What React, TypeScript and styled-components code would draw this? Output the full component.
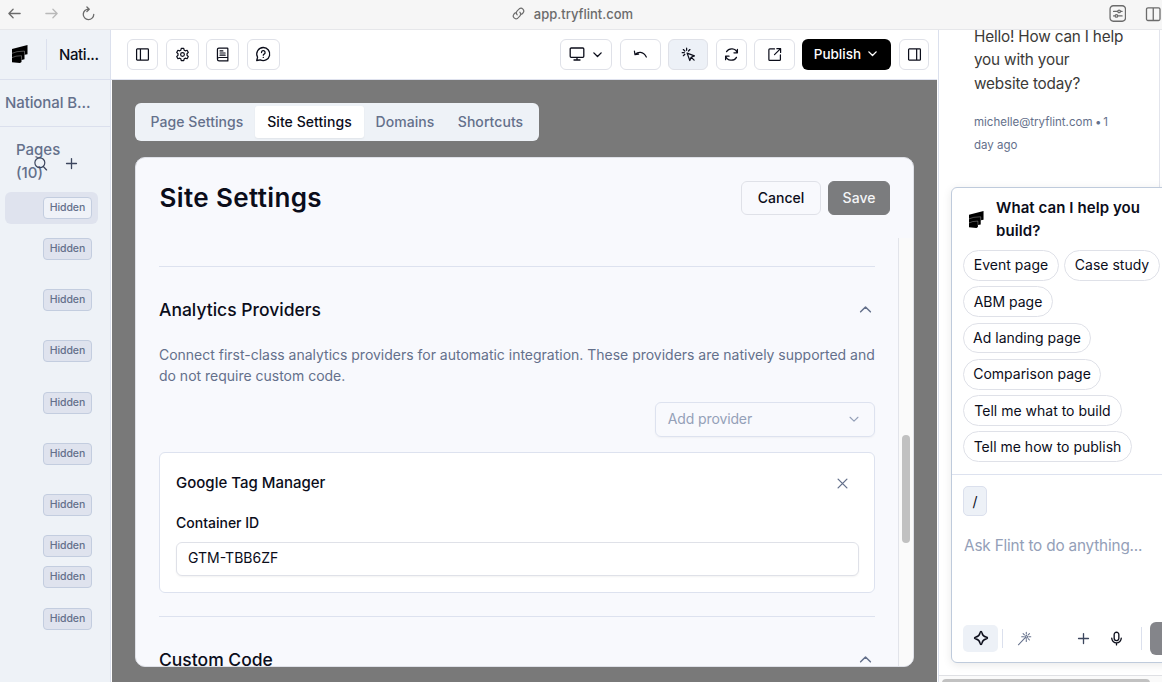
import React from "react";
import styled, { createGlobalStyle, css } from "styled-components";

const Global = createGlobalStyle`
  *, *::before, *::after { box-sizing: border-box; }
  html, body { margin: 0; padding: 0; overflow: hidden; }
  body { font-family: Inter, "Liberation Sans", sans-serif; color: #0b0d1a; background: #fff; }
  button, input { font-family: inherit; color: inherit; margin: 0; }
  h1, h2, h3, p { margin: 0; font-weight: inherit; }
`;

const Page = styled.div`
  width: 1162px;
  height: 682px;
  display: flex;
  flex-direction: column;
  overflow: hidden;
`;

const BrowserBar = styled.header`
  height: 30px;
  flex: none;
  display: flex;
  align-items: center;
  justify-content: space-between;
  background: #f6f6f6;
  border-bottom: 1px solid #e6e7ea;
  padding: 0 2px 2px 7px;
  color: #6b6b6b;
`;
const NavGroup = styled.div`
  display: flex;
  align-items: center;
  gap: 22px;
  width: 160px;
`;
const Address = styled.div`
  display: flex;
  align-items: center;
  gap: 8px;
  font-size: 13px;
  font-weight: 500;
  line-height: 18px;
  margin-left: -24px;
`;
const BrowserTools = styled.div`
  display: flex;
  align-items: center;
  justify-content: flex-end;
  gap: 19px;
  width: 160px;
  margin-right: -1px;
`;

const Body = styled.div`
  flex: 1;
  display: flex;
  min-height: 0;
`;

const Sidebar = styled.aside`
  width: 111px;
  flex: none;
  background: #eef2f7;
  border-right: 1px solid #dbe0ed;
  display: flex;
  flex-direction: column;
`;
const Brand = styled.div`
  height: 50px;
  flex: none;
  display: flex;
  align-items: center;
  padding: 0 0 1px 12px;
  border-bottom: 1px solid #dbe0ed;
  font-size: 15px;
  font-weight: 500;
  letter-spacing: -0.4px;
`;
const BrandRule = styled.span`
  width: 1px;
  height: 31px;
  background: #dbe0ed;
  margin: 0 12px 0 18px;
`;
const Project = styled.div`
  height: 47px;
  flex: none;
  padding: 0 5px;
  line-height: 46px;
  border-bottom: 1px solid #dbe0ed;
  font-size: 15px;
  font-weight: 500;
  letter-spacing: -0.1px;
  color: #64708b;
  white-space: nowrap;
`;
const PagesHead = styled.div`
  height: 65px;
  flex: none;
  display: flex;
  padding: 11px 0 0 16px;
  color: #64708b;
  font-size: 15px;
  font-weight: 500;
  line-height: 23px;
`;
const PagesLabel = styled.span`
  width: 48px;
`;
const PagesActions = styled.div`
  display: flex;
  gap: 16px;
  margin: 18px 0 0 -31px;
  color: #3c465e;
`;
const PageList = styled.div`
  display: flex;
  flex-direction: column;
  padding: 0 12px 0 5px;
`;
const PageRow = styled.div<{ $gap?: number; $selected?: boolean }>`
  height: ${(p) => (p.$selected ? 32 : 22)}px;
  margin-top: ${(p) => p.$gap ?? 0}px;
  border-radius: 6px;
  display: flex;
  align-items: center;
  justify-content: flex-end;
  padding-right: 6px;
  background: ${(p) => (p.$selected ? "#dfe3ee" : "transparent")};
`;
const Badge = styled.span<{ $light?: boolean }>`
  width: 49px;
  height: 22px;
  display: flex;
  align-items: center;
  justify-content: center;
  padding-bottom: 1px;
  border: 1px solid #c3cddf;
  border-radius: 4px;
  background: ${(p) => (p.$light ? "#eff2f8" : "#dfe3ee")};
  color: #64708b;
  font-size: 10.5px;
  font-weight: 500;
  letter-spacing: -0.1px;
`;

const Main = styled.main`
  width: 827px;
  flex: none;
  display: flex;
  flex-direction: column;
  padding-right: 1px;
`;
const Toolbar = styled.div`
  height: 50px;
  flex: none;
  display: flex;
  align-items: center;
  justify-content: space-between;
  padding: 0 8px 1px 16px;
  border-bottom: 1px solid #dfe2ee;
`;
const ToolGroup = styled.div`
  display: flex;
  align-items: center;
  gap: 7.5px;
`;
const ToolButton = styled.button<{ $w?: number; $active?: boolean }>`
  width: ${(p) => p.$w ?? 33}px;
  height: 31px;
  padding: 0;
  display: flex;
  align-items: center;
  justify-content: center;
  gap: 6px;
  border: 1px solid #dfe1e8;
  border-radius: 6px;
  background: ${(p) => (p.$active ? "#edf1f7" : "#fff")};
`;
const Publish = styled.button`
  width: 89px;
  height: 31px;
  margin: 0 0.6px 0 -0.6px;
  padding: 0 0 1px;
  display: flex;
  align-items: center;
  justify-content: center;
  gap: 5px;
  border: 0;
  border-radius: 6px;
  background: #000;
  color: #fff;
  font-size: 13.5px;
  font-weight: 500;
`;

const Canvas = styled.div`
  flex: 1;
  min-height: 0;
  margin-left: 1px;
  background: #797979;
  padding: 23px 23px 0;
  display: flex;
  flex-direction: column;
  align-items: flex-start;
`;
const Tabs = styled.div`
  width: 404px;
  height: 38px;
  flex: none;
  display: flex;
  align-items: center;
  padding: 0 3px 0 4px;
  border-radius: 6px;
  background: #eef2f7;
`;
const Tab = styled.button<{ $w: number; $active?: boolean }>`
  width: ${(p) => p.$w}px;
  height: 32px;
  padding: 0 0 2px;
  border: 0;
  border-radius: 3px;
  font-size: 14px;
  font-weight: 500;
  letter-spacing: 0.06px;
  white-space: nowrap;
  color: #64708b;
  background: transparent;
  ${(p) =>
    p.$active &&
    css`
      background: #fff;
      color: #0b0d1a;
      box-shadow: 0 1px 2px rgba(0, 0, 0, 0.06);
    `}
`;

const Panel = styled.section`
  width: 779px;
  height: 510px;
  flex: none;
  margin-top: 16px;
  border: 1px solid #dfe1e8;
  border-radius: 10px;
  background: #f8f9fd;
  overflow: hidden;
  display: flex;
  flex-direction: column;
`;
const PanelHead = styled.div`
  height: 80px;
  flex: none;
  display: flex;
  align-items: center;
  padding: 0 23px 0 23.5px;
`;
const Title = styled.h1`
  flex: 1;
  font-size: 26px;
  font-weight: 600;
  line-height: 32px;
  letter-spacing: 0.37px;
`;
const ActionButton = styled.button<{ $w: number; $filled?: boolean }>`
  width: ${(p) => p.$w}px;
  height: 34px;
  padding: 0 0 1px;
  border-radius: 6px;
  border: 1px solid ${(p) => (p.$filled ? "#7b7c7e" : "#dfe1e8")};
  background: ${(p) => (p.$filled ? "#7b7c7e" : "transparent")};
  color: ${(p) => (p.$filled ? "#f4f5f7" : "#0b0d1a")};
  margin-left: ${(p) => (p.$filled ? 7 : 0)}px;
  font-size: 14px;
  font-weight: 500;
`;
const ScrollArea = styled.div`
  flex: 1;
  min-height: 0;
  display: flex;
`;
const Sections = styled.div`
  flex: 1;
  padding: 28px 23px 0;
`;
const ScrollTrack = styled.div`
  width: 16px;
  background: #fafafa;
  border-left: 1px solid #e2e4ea;
  border-right: 1px solid #efefef;
  padding: 197px 3px 0;
`;
const ScrollThumb = styled.div`
  width: 8px;
  height: 108px;
  border-radius: 4px;
  background: #c1c1c1;
`;
const Rule = styled.div`
  height: 1px;
  background: #dde2ef;
`;
const SectionHead = styled.div`
  height: 24px;
  margin-top: 31px;
  display: flex;
  align-items: center;
  justify-content: space-between;
  padding: 0 2px 1px 0;
  color: #64708b;
`;
const SectionTitle = styled.h2`
  color: #0b0d1a;
  font-size: 17.5px;
  font-weight: 500;
  line-height: 23px;
`;
const ProviderName = styled.h3`
  color: #0b0d1a;
  font-size: 15px;
  font-weight: 500;
  line-height: 22px;
`;
const Description = styled.p`
  margin-top: 22px;
  font-size: 14px;
  line-height: 21px;
  letter-spacing: -0.01px;
  color: #64708b;
  white-space: nowrap;
`;
const SelectBox = styled.button`
  width: 220px;
  height: 35px;
  margin: 16px 0 0 auto;
  padding: 0 13px 2px 12px;
  display: flex;
  align-items: center;
  justify-content: space-between;
  border: 1px solid #dde2ef;
  border-radius: 6px;
  background: transparent;
  box-shadow: 0 1px 2px rgba(0, 0, 0, 0.04);
  color: #94a0b8;
  font-size: 14px;
  letter-spacing: -0.12px;
`;
const ProviderCard = styled.div`
  height: 141px;
  margin: 15px 0 23px;
  padding: 19px 15px 0 16px;
  border: 1px solid #dde2ef;
  border-radius: 6px;
  background: #fff;
`;
const ProviderHead = styled.div`
  display: flex;
  justify-content: space-between;
  align-items: center;
  height: 24px;
  padding: 0 9px 2px 0;
  color: #64708b;
`;
const FieldLabel = styled.label`
  display: block;
  margin-top: 17px;
  font-size: 14px;
  font-weight: 500;
  line-height: 20px;
`;
const Field = styled.input`
  display: block;
  width: 100%;
  height: 34px;
  margin-top: 9px;
  padding: 0 11px 3px;
  border: 1px solid #dfe1e8;
  border-radius: 6px;
  box-shadow: 0 1px 2px rgba(0, 0, 0, 0.05);
  background: #fff;
  font-size: 14px;
  outline: 0;
`;

const Assistant = styled.aside`
  flex: 1;
  min-width: 0;
  border-left: 1px solid #dbe0ed;
  background: #fff;
  display: flex;
  flex-direction: column;
`;
const Messages = styled.div`
  height: 157px;
  flex: none;
  width: 221px;
  border-right: 1px solid #e2e4ec;
  padding: 0 0 0 35px;
`;
const Greeting = styled.p`
  margin-top: -5.5px;
  color: #3b3a38;
  font-size: 15.3px;
  letter-spacing: -0.18px;
  line-height: 23.6px;
  white-space: pre-line;
`;
const Meta = styled.p`
  margin-top: 16px;
  color: #64708b;
  font-size: 11.5px;
  line-height: 23px;
  white-space: pre-line;
`;
const MetaTime = styled.span`
  letter-spacing: -0.7px;
`;
const Composer = styled.section`
  width: 240px;
  height: 476px;
  flex: none;
  margin-left: 12px;
  border: 1px solid #bfcbdc;
  border-radius: 6px;
  background: #fff;
  box-shadow: 0 2px 10px rgba(0, 0, 0, 0.09);
  display: flex;
  flex-direction: column;
`;
const Prompt = styled.div`
  display: flex;
  align-items: center;
  gap: 12px;
  padding: 8px 0 0 17px;
  font-size: 15px;
  font-weight: 600;
  line-height: 23px;
  letter-spacing: 0.08px;
  white-space: pre-line;
`;
const Chips = styled.div`
  display: flex;
  flex-wrap: wrap;
  width: 210px;
  padding: 8px 0 0 11px;
  gap: 5.5px 5px;
`;
const Chip = styled.button<{ $w: number; $last?: boolean }>`
  width: ${(p) => p.$w}px;
  height: 30.8px;
  flex: none;
  margin-right: ${(p) => (p.$last ? 30 : 0)}px;
  padding: 0 0 1px;
  border: 1px solid #dfe1e8;
  border-radius: 16px;
  background: #fff;
  font-size: 14px;
  white-space: nowrap;
`;
const ChipRule = styled(Rule)`
  margin-top: 12px;
  flex: none;
`;
const Slash = styled.span`
  width: 24px;
  height: 30px;
  margin: 11px 0 0 11px;
  display: flex;
  align-items: center;
  justify-content: center;
  border: 1px solid #dbe0ed;
  border-radius: 5px;
  background: #edf1f7;
  font-size: 14px;
`;
const Placeholder = styled.p`
  margin: 17.5px 0 0 12px;
  font-size: 15.3px;
  letter-spacing: -0.17px;
  line-height: 24px;
  color: #94a0b8;
`;
const ComposerTools = styled.div`
  display: flex;
  align-items: center;
  height: 34px;
  margin: auto 0 7px 11px;
`;
const ModeButton = styled.button`
  width: 35px;
  height: 27px;
  flex: none;
  padding: 0;
  border: 0;
  border-radius: 5px;
  background: #edf1f7;
  display: flex;
  align-items: center;
  justify-content: center;
`;
const ToolRule = styled.span<{ $h: number; $left: number; $right: number }>`
  width: 1px;
  height: ${(p) => p.$h}px;
  flex: none;
  margin: 0 ${(p) => p.$right}px 0 ${(p) => p.$left}px;
  background: #dbe0ed;
`;
const PlainIcons = styled.div`
  display: flex;
  align-items: center;
  gap: 18px;
  margin-left: 44px;
  color: #0b0d1a;
`;
const Send = styled.button`
  width: 40px;
  height: 33px;
  border: 0;
  border-radius: 6px;
  background: #84858a;
  flex: none;
`;
const BottomScroll = styled.div`
  margin-top: auto;
  height: 7px;
  border-top: 1px solid #dfe0e4;
  background: #fafafa;
  padding: 3px 0 0 3px;
  overflow: hidden;
`;
const BottomThumb = styled.div`
  width: 208px;
  height: 8px;
  border-radius: 4px;
  background: #c1c1c1;
`;

const Svg = styled.svg`
  display: block;
  flex: none;
  fill: none;
  stroke: currentColor;
  stroke-linecap: round;
  stroke-linejoin: round;
`;

type IconProps = { d: string; w?: number; h?: number; sw?: number; box?: string; color?: string };
const Icon = ({ d, w = 16, h = w, sw = 1.3, box = "0 0 16 16", color }: IconProps) => (
  <Svg width={w} height={h} viewBox={box} strokeWidth={sw} color={color} aria-hidden>
    <path d={d} />
  </Svg>
);

const icons = {
  back: "M14 8H2M6.5 3.5 2 8l4.500 4.500",
  forward: "M2 8h12M9.500 3.500 14 8l-4.500 4.500",
  reload: "M8.300 3.300A5.600 5.600 0 1 0 13.600 9M6.300 1l2.500 2.400-2.500 2.500",
  link: "M6.600 9.400a3 3 0 0 1 0-4.200l2.200-2.200a3 3 0 0 1 4.200 4.200l-1.600 1.600M9.400 6.600a3 3 0 0 1 0 4.200l-2.200 2.200a3 3 0 0 1-4.200-4.200l1.600-1.600",
  tune: "M4 .7h8.500a3 3 0 0 1 3 3v8.600a3 3 0 0 1-3 3H4a3 3 0 0 1-3-3V3.700a3 3 0 0 1 3-3zM4.300 6h4M10.800 6h1.500M4.300 10.300h1.500M8.300 10.300h4M8.300 6a1.200 1.200 0 1 0 2.400 0a1.200 1.200 0 1 0-2.400 0M5.800 10.300a1.200 1.200 0 1 0 2.400 0a1.200 1.200 0 1 0-2.400 0",
  split: "M3 1.800h10.500a1.500 1.500 0 0 1 1.500 1.500v9.700a1.500 1.500 0 0 1-1.500 1.500H3A1.500 1.500 0 0 1 1.500 13V3.300A1.500 1.500 0 0 1 3 1.800zM8.250 1.800v12.700",
  panelLeft: "M2.500 2h11a.8.8 0 0 1 .8.8v10.400a.8.8 0 0 1-.8.800h-11a.8.8 0 0 1-.8-.8V2.800A.8.8 0 0 1 2.500 2zM5.800 2v12",
  panelRight: "M2.500 2h11a.8.8 0 0 1 .8.8v10.400a.8.8 0 0 1-.8.800h-11a.8.8 0 0 1-.8-.8V2.800A.8.8 0 0 1 2.500 2zM10.300 2v12",
  gear: "M6.700 1.500h2.600l.5 1.900 1.200.7 1.900-.6 1.300 2.300-1.400 1.400v1.600l1.400 1.400-1.300 2.300-1.900-.6-1.200.7-.5 1.900H6.700l-.5-1.900-1.200-.7-1.900.6-1.300-2.300 1.400-1.400V7.200L1.800 5.800l1.300-2.300 1.900.6 1.200-.7zM6 8a2 2 0 1 0 4 0a2 2 0 1 0-4 0",
  book: "M2.600 12.900V2.700A1.500 1.500 0 0 1 4.100 1.200h9a.6.6 0 0 1 .6.6v13H4.400a1.800 1.800 0 0 1 0-3.600h9.300M5.400 4.200h3M5.400 6.400h5.400M5.400 8.700h5.400",
  help: "M8.300 1.500a6.500 6.500 0 1 1-3 12.300l-3.600.7.9-3.300A6.500 6.500 0 0 1 8.300 1.500zM6.500 6.500a1.800 1.800 0 1 1 2.600 1.600c-.6.3-.8.600-.8 1.100M8.300 11.300v.1",
  monitor: "M2.200 2h11.600a1 1 0 0 1 1 1v7.300a1 1 0 0 1-1 1H2.200a1 1 0 0 1-1-1V3a1 1 0 0 1 1-1zM8 11.300v2.700M5 14h6",
  undo: "M1.500 4.300 2.100 8.200 6 7.600M2.100 8.100C5 5 11 4 14.200 10.700",
  click: "M6.500 6.500l7.800 3-3.500 1.400-1.400 3.500zM11 11l3 3M6 1.300v2.200M2.500 2.700l1.600 1.600M1.300 6h2.200M9.500 2.700 8 4.300M2.500 9.300l1.600-1.500",
  sync: "M14.200 6.200A6.400 6.400 0 0 0 2.700 5M1.800 9.800A6.400 6.400 0 0 0 13.300 11M14.300 2.500v3.700h-3.700M1.700 13.500V9.800h3.700",
  open: "M8 2H3a1 1 0 0 0-1 1v10.300a1 1 0 0 0 1 1h10.300a1 1 0 0 0 1-1V8.500M10.500 1.800h4v4M14.200 2 8 8.200",
  search: "M2 7.200a5.300 5.300 0 1 0 10.600 0a5.300 5.300 0 1 0-10.600 0M11 11.200l3.500 3.700",
  plus: "M8 2.700v10.600M2.700 8h10.600",
  x: "M3.300 3.300l9.400 9.400M12.700 3.300l-9.400 9.400",
  down: "M3.500 6 8 10.500 12.500 6",
  up: "M2.800 10.500 8 5.300l5.200 5.200",
  spark: "M8 1.500c.6 0 .8.500 1 1.500.6 2.700 1.300 3.400 4 4 1 .2 1.500.4 1.500 1s-.5.800-1.500 1c-2.700.6-3.400 1.300-4 4-.2 1-.4 1.500-1 1.500s-.8-.5-1-1.500c-.6-2.700-1.300-3.400-4-4-1-.2-1.500-.4-1.500-1s.5-.8 1.500-1c2.700-.6 3.400-1.300 4-4 .2-1 .4-1.500 1-1.500z",
  wand: "M1.500 14.700 8.300 7.700M9.900 1.300v2M9.900 9.200v2M5 6.200h2M12.700 6.200h2M6.500 2.800l1.400 1.400M13.300 2.800l-1.400 1.400M13.300 9.600l-1.400-1.400M8.300 6.200l1.600-1.600 1.600 1.600-1.600 1.600z",
  mic: "M8 1.300a2.500 2.500 0 0 1 2.500 2.500v4a2.500 2.500 0 0 1-5 0v-4A2.500 2.500 0 0 1 8 1.300zM2.900 7.500a5.100 5.100 0 0 0 10.200 0M8 12.600v2.200",
};

const FlintMark = ({ w, h }: { w: number; h: number }) => (
  <svg width={w} height={h} viewBox="0 0 16 18" aria-hidden>
    <path d="M0 4 15.500 0v9.300l-3 .5v4.500l-3 .6V17l-1.500 1L0 17.200z" fill="#000" />
    <path d="M0 8.300 5 6.700l7.500-.6v3.500M0 12.600l4-1.400 5.500-.5v4" fill="none" stroke="#fff" strokeOpacity=".55" strokeWidth=".6" />
  </svg>
);

const rowGaps = [14, 29, 29, 29.5, 29, 29.5, 19, 9, 19.5];

export default function App() {
  return (
    <>
      <Global />
      <Page>
        <BrowserBar>
          <NavGroup>
            <Icon d={icons.back} w={15} sw={1.4} />
            <Icon d={icons.forward} w={15} sw={1.4} color="#b9b9b9" />
            <Icon d={icons.reload} w={15} sw={1.4} />
          </NavGroup>
          <Address>
            <Icon d={icons.link} w={15} sw={1.2} />
            <span>app.tryflint.com</span>
          </Address>
          <BrowserTools>
            <Icon d={icons.tune} w={17} sw={1.2} />
            <Icon d={icons.split} w={16} sw={1.3} />
          </BrowserTools>
        </BrowserBar>
        <Body>
          <Sidebar>
            <Brand>
              <FlintMark w={16} h={18} />
              <BrandRule />
              <span>Nati...</span>
            </Brand>
            <Project>National B...</Project>
            <PagesHead>
              <PagesLabel>Pages (10)</PagesLabel>
              <PagesActions>
                <Icon d={icons.search} w={15} sw={1.3} />
                <Icon d={icons.plus} w={15} sw={1.4} />
              </PagesActions>
            </PagesHead>
            <PageList>
              <PageRow $selected>
                <Badge $light>Hidden</Badge>
              </PageRow>
              {rowGaps.map((gap, i) => (
                <PageRow key={i} $gap={gap}>
                  <Badge>Hidden</Badge>
                </PageRow>
              ))}
            </PageList>
          </Sidebar>

          <Main>
            <Toolbar>
              <ToolGroup>
                <ToolButton $w={31}><Icon d={icons.panelLeft} w={15} /></ToolButton>
                <ToolButton><Icon d={icons.gear} w={15} /></ToolButton>
                <ToolButton><Icon d={icons.book} w={15} /></ToolButton>
                <ToolButton><Icon d={icons.help} w={16} /></ToolButton>
              </ToolGroup>
              <ToolGroup>
                <ToolButton $w={52}>
                  <Icon d={icons.monitor} w={16} />
                  <Icon d={icons.down} w={13} sw={1.7} />
                </ToolButton>
                <ToolButton $w={41}><Icon d={icons.undo} w={15} /></ToolButton>
                <ToolButton $w={40} $active><Icon d={icons.click} w={15} /></ToolButton>
                <ToolButton $w={31}><Icon d={icons.sync} w={15} /></ToolButton>
                <ToolButton $w={41}><Icon d={icons.open} w={15} /></ToolButton>
                <Publish>
                  Publish
                  <Icon d={icons.down} w={13} sw={1.7} />
                </Publish>
                <ToolButton $w={30}><Icon d={icons.panelRight} w={15} /></ToolButton>
              </ToolGroup>
            </Toolbar>
            <Canvas>
              <Tabs>
                <Tab $w={116}>Page Settings</Tab>
                <Tab $w={109} $active>Site Settings</Tab>
                <Tab $w={82}>Domains</Tab>
                <Tab $w={89}>Shortcuts</Tab>
              </Tabs>
              <Panel>
                <PanelHead>
                  <Title>Site Settings</Title>
                  <ActionButton $w={80}>Cancel</ActionButton>
                  <ActionButton $w={62} $filled>Save</ActionButton>
                </PanelHead>
                <ScrollArea>
                  <Sections>
                    <Rule />
                    <SectionHead>
                      <SectionTitle>Analytics Providers</SectionTitle>
                      <Icon d={icons.up} w={15} sw={1.6} />
                    </SectionHead>
                    <Description>
                      Connect first-class analytics providers for automatic integration. These providers are natively supported and
                      <br />
                      do not require custom code.
                    </Description>
                    <SelectBox>
                      Add provider
                      <Icon d={icons.down} w={14} sw={1.3} />
                    </SelectBox>
                    <ProviderCard>
                      <ProviderHead>
                        <ProviderName>Google Tag Manager</ProviderName>
                        <Icon d={icons.x} w={15} sw={1.4} />
                      </ProviderHead>
                      <FieldLabel>Container ID</FieldLabel>
                      <Field defaultValue="GTM-TBB6ZF" />
                    </ProviderCard>
                    <Rule />
                    <SectionHead>
                      <SectionTitle>Custom Code</SectionTitle>
                      <Icon d={icons.up} w={15} sw={1.6} />
                    </SectionHead>
                  </Sections>
                  <ScrollTrack>
                    <ScrollThumb />
                  </ScrollTrack>
                </ScrollArea>
              </Panel>
            </Canvas>
          </Main>

          <Assistant>
            <Messages>
              <Greeting>{"Hello! How can I help\nyou with your\nwebsite today?"}</Greeting>
              <Meta>
                michelle@tryflint.com<MetaTime> • 1</MetaTime>
                {"\nday ago"}
              </Meta>
            </Messages>
            <Composer>
              <Prompt>
                <FlintMark w={15} h={17} />
                <span>{"What can I help you\nbuild?"}</span>
              </Prompt>
              <Chips>
                <Chip $w={96}>Event page</Chip>
                <Chip $w={96}>Case study</Chip>
                <Chip $w={90} $last>ABM page</Chip>
                <Chip $w={128}>Ad landing page</Chip>
                <Chip $w={138}>Comparison page</Chip>
                <Chip $w={159}>Tell me what to build</Chip>
                <Chip $w={169}>Tell me how to publish</Chip>
              </Chips>
              <ChipRule />
              <Slash>/</Slash>
              <Placeholder>Ask Flint to do anything...</Placeholder>
              <ComposerTools>
                <ModeButton><Icon d={icons.spark} w={16} sw={1.4} /></ModeButton>
                <ToolRule $h={19} $left={4} $right={14} />
                <Icon d={icons.wand} w={15} sw={1.1} color="#64708b" />
                <PlainIcons>
                  <Icon d={icons.plus} w={15} sw={1.4} color="#3c465e" />
                  <Icon d={icons.mic} w={15} sw={1.4} />
                </PlainIcons>
                <ToolRule $h={23} $left={17} $right={8} />
                <Send aria-label="Send" />
              </ComposerTools>
            </Composer>
            <BottomScroll>
              <BottomThumb />
            </BottomScroll>
          </Assistant>
        </Body>
      </Page>
    </>
  );
}
